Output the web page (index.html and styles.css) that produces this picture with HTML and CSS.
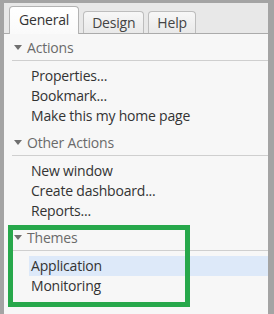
FILE: index.html
```html
<!DOCTYPE html>
<html lang="en">
<head>
  <meta charset="UTF-8">
  <meta name="viewport" content="width=device-width,initial-scale=1">
  <title>Tasks</title>
  <link rel="stylesheet" href="styles.css">
</head>
<body>
  <div class="panel">
    <div class="tabs">
      <div class="tab active">General</div>
      <div class="tab">Design</div>
      <div class="tab">Help</div>
    </div>

    <div class="content">
      <div class="section">
        <div class="section-head"><span class="caret"></span>Actions</div>
        <ul class="items">
          <li>Properties...</li>
          <li>Bookmark...</li>
          <li>Make this my home page</li>
        </ul>
      </div>

      <div class="section">
        <div class="section-head"><span class="caret"></span>Other Actions</div>
        <ul class="items">
          <li>New window</li>
          <li>Create dashboard...</li>
          <li>Reports...</li>
        </ul>
      </div>

      <div class="section themes">
        <div class="section-head"><span class="caret"></span>Themes</div>
        <ul class="items">
          <li class="selected">Application</li>
          <li>Monitoring</li>
        </ul>
        <div class="callout"></div>
      </div>
    </div>
  </div>
</body>
</html>
```

FILE: styles.css
```css
* { box-sizing: border-box; margin: 0; padding: 0; }
html, body { height: 100%; }
body {
  background: #a4a4a4;
  font: 14px "Open Sans", "Noto Sans", sans-serif;
  letter-spacing: -0.2px;
  color: #333;
  overflow: hidden;
}
.panel {
  margin: 3px 6px 0 4px;
  min-height: calc(100vh - 3px);
  background: #e8e8e8;
  display: flex;
  flex-direction: column;
}
.tabs {
  height: 31px;
  padding-left: 5px;
  display: flex;
  align-items: flex-end;
  gap: 4px;
  border-bottom: 1px solid #ababab;
}
.tab {
  height: 22px;
  padding: 1px 8px 0;
  border: 1px solid #bdbdbd;
  border-bottom: none;
  border-radius: 4px 4px 0 0;
  background: linear-gradient(to bottom, #f7f7f7, #e9e9e9);
  color: #444;
  line-height: 20px;
}
.tab.active {
  height: 28px;
  margin-bottom: -1px;
  padding: 3px 9px 0;
  background: linear-gradient(to bottom, #fff, #fafafa);
  border-color: #b3b3b3;
  color: #333;
}
.content {
  flex: 1;
  background: #f7f7f7;
}
.section { position: relative; }
.section-head {
  margin-left: 8px;
  padding: 1px 0 0 2px;
  line-height: 25px;
  display: flex;
  align-items: center;
  color: #6a6a6a;
  border-bottom: 1px solid #cfcfcf;
}
.caret {
  width: 0;
  height: 0;
  margin-right: 5px;
  border-left: 4px solid transparent;
  border-right: 4px solid transparent;
  border-top: 5px solid #6f6f6f;
}
.items {
  list-style: none;
  padding: 5px 0 3px;
}
.items li {
  margin-left: 25px;
  padding-left: 2px;
  line-height: 20px;
  color: #333;
}
.items li.selected { background: #dde9f9; }
.callout {
  position: absolute;
  top: 1px;
  left: 4px;
  width: 182px;
  height: 82px;
  border: 5px solid #27a84b;
}
```
